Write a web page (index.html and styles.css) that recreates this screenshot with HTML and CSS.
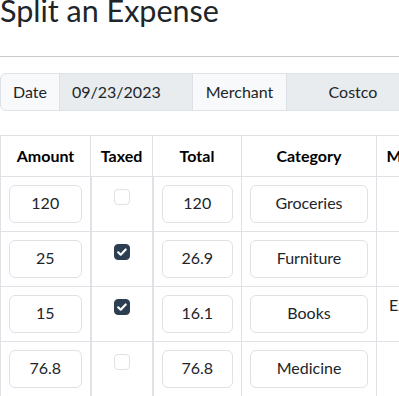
FILE: index.html
```
<html lang="en">
  <head>
    <title>Split an Expense</title>
    <meta charset="utf-8">
    <meta name="viewport" content="width=device-width, initial-scale=1.0">
    <link rel="stylesheet" href="styles.css">
  </head>

  <body>
    <div class="wrapper">
      <h1 class="title">Split an Expense</h1>
      <hr class="rule">

      <div class="input-group">
        <span class="group-text group-text--first">Date</span>
        <span class="group-field group-field--date">09/23/2023</span>
        <span class="group-text group-text--merchant">Merchant</span>
        <span class="group-field group-field--merchant">Costco</span>
      </div>

      <table class="split-table">
        <colgroup>
          <col class="col-amount">
          <col class="col-taxed">
          <col class="col-total">
          <col class="col-category">
          <col class="col-memo">
        </colgroup>
        <thead>
          <tr>
            <th>Amount</th>
            <th>Taxed</th>
            <th>Total</th>
            <th>Category</th>
            <th>Memo</th>
          </tr>
        </thead>
        <tbody>
          <tr>
            <td><div class="field">120</div></td>
            <td class="cell-check"><span class="check"></span></td>
            <td><div class="field">120</div></td>
            <td><div class="field">Groceries</div></td>
            <td class="cell-memo"></td>
          </tr>
          <tr>
            <td><div class="field">25</div></td>
            <td class="cell-check">
              <span class="check check--on">
                <svg viewBox="0 0 16 16" width="16" height="16"><path d="M4.2 8.3l2.5 2.4 5-5.2" fill="none" stroke="#fff" stroke-width="2.2" stroke-linecap="round" stroke-linejoin="round"/></svg>
              </span>
            </td>
            <td><div class="field">26.9</div></td>
            <td><div class="field">Furniture</div></td>
            <td class="cell-memo"></td>
          </tr>
          <tr>
            <td><div class="field">15</div></td>
            <td class="cell-check">
              <span class="check check--on">
                <svg viewBox="0 0 16 16" width="16" height="16"><path d="M4.2 8.3l2.5 2.4 5-5.2" fill="none" stroke="#fff" stroke-width="2.2" stroke-linecap="round" stroke-linejoin="round"/></svg>
              </span>
            </td>
            <td><div class="field">16.1</div></td>
            <td><div class="field">Books</div></td>
            <td class="cell-memo">Extra</td>
          </tr>
          <tr>
            <td><div class="field">76.8</div></td>
            <td class="cell-check"><span class="check"></span></td>
            <td><div class="field">76.8</div></td>
            <td><div class="field">Medicine</div></td>
            <td class="cell-memo"></td>
          </tr>
        </tbody>
      </table>
    </div>
  </body>
</html>
```

FILE: styles.css
```
:root {
  --border: #dee2e6;
  --text: #212529;
  --dark: #2c3e50;
}
html, body {
  margin: 0;
  padding: 0;
  overflow: hidden;
}

body {
  font-family: Lato, "Open Sans", sans-serif;
  font-size: 16px;
  line-height: 1.5;
  color: var(--text);
  background-color: white;
}

.wrapper {
  width: 460px;
}

.title {
  margin: -8px 0 0 0;
  font-size: 30.5px;
  font-weight: 400;
  line-height: 1.2;
}

.rule {
  margin: 27px 0 16px 0;
  border: 0;
  border-top: 1px solid #c9cacb;
  height: 0;
}

.input-group {
  display: flex;
  height: 38px;
  box-sizing: border-box;
}

.group-text,
.group-field {
  box-sizing: border-box;
  padding: 6px 12px;
  border: 1px solid var(--border);
  margin-left: -1px;
  white-space: nowrap;
}

.group-text {
  background-color: #f8f9fa;
}

.group-text--first {
  margin-left: 0;
  border-radius: 6px 0 0 6px;
  width: 60px;
}

.group-field {
  background-color: #e9ecef;
}

.group-field--date {
  width: 134px;
}

.group-text--merchant {
  width: 95px;
  text-align: center;
}

.group-field--merchant {
  width: 134px;
  text-align: center;
}

.split-table {
  margin-top: 24px;
  border-collapse: collapse;
  table-layout: fixed;
  width: 442px;
}

.col-amount { width: 90px; }
.col-taxed { width: 62px; }
.col-total { width: 89px; }
.col-category { width: 135px; }
.col-memo { width: 66px; }

.split-table th,
.split-table td {
  border: 1px solid var(--border);
  padding: 8px;
  vertical-align: top;
}

.split-table th {
  height: 41px;
  box-sizing: border-box;
  padding: 8px;
  vertical-align: middle;
  font-weight: 700;
  text-align: center;
  color: #000;
}

.split-table td:nth-child(2),
.split-table td:nth-child(3) {
  border-left-width: 2px;
}

.field {
  box-sizing: border-box;
  height: 38px;
  padding: 7px 12px 5px 12px;
  border: 1px solid var(--border);
  border-radius: 6px;
  text-align: center;
  white-space: nowrap;
}

.cell-check {
  text-align: center;
}

.check {
  display: inline-block;
  box-sizing: border-box;
  width: 16px;
  height: 16px;
  margin-top: 4px;
  border: 1px solid var(--border);
  border-radius: 4px;
  background-color: white;
  vertical-align: top;
}

.check--on {
  border-color: var(--dark);
  background-color: var(--dark);
}

.check svg {
  display: block;
  margin: -1px;
}

.split-table td.cell-memo {
  padding-left: 12px;
  text-align: left;
}
```
